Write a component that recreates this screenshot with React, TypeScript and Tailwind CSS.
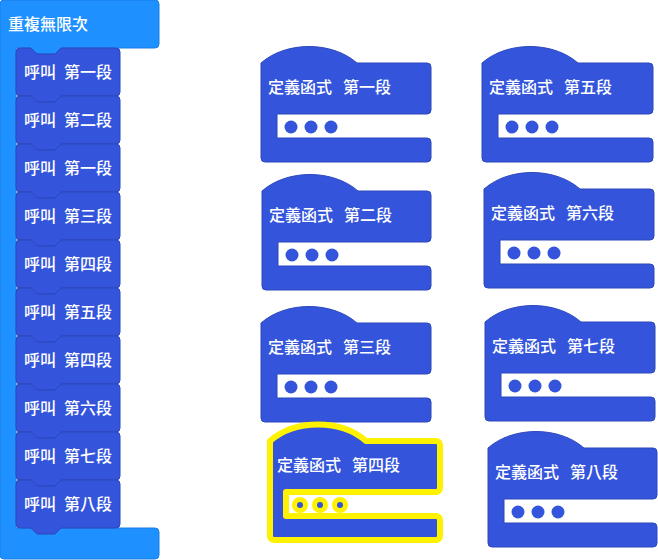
const FONT = { fontFamily: '"Noto Sans CJK TC", "Noto Sans", sans-serif' };

const calls = ['第一段', '第二段', '第一段', '第三段', '第四段', '第五段', '第四段', '第六段', '第七段', '第八段'];

const defs = [
  { x: 261, y: 63, w: 170, name: '第一段' },
  { x: 262, y: 191, w: 169, name: '第二段' },
  { x: 261, y: 323, w: 170, name: '第三段' },
  { x: 270, y: 441, w: 170, name: '第四段', selected: true },
  { x: 482, y: 63, w: 171, name: '第五段' },
  { x: 484, y: 189, w: 170, name: '第六段' },
  { x: 485, y: 322, w: 170, name: '第七段' },
  { x: 488, y: 448, w: 169, name: '第八段' },
];

function CallBlock({ name }: { name: string }) {
  const w = 104;
  const h = 48;
  const d = `M0,4 a4,4 0 0 1 4,-4 H15 l6,6 H39 l6,-6 H${w - 4} a4,4 0 0 1 4,4 V${h - 4} a4,4 0 0 1 -4,4 H45 l-6,6 H21 l-6,-6 H4 a4,4 0 0 1 -4,-4 Z`;
  return (
    <div className="relative w-[104px] h-12 flex items-center pl-2 pb-[2px] gap-2 text-white text-base font-medium">
      <svg className="absolute inset-0 overflow-visible" width={w} height={h}>
        <path d={d} fill="#3455db" stroke="#2c47bb" strokeWidth="1" />
      </svg>
      <span className="relative">呼叫</span>
      <span className="relative">{name}</span>
    </div>
  );
}

function DefBlock({ x, y, w, name, selected }: { x: number; y: number; w: number; name: string; selected?: boolean }) {
  const o = 17;
  const d = `M0,${o} c25,-22 71,-22 96,0 H${w - 4} a4,4 0 0 1 4,4 V${o + 47} a4,4 0 0 1 -4,4 H16 V${o + 75} H${w - 4} a4,4 0 0 1 4,4 V${o + 95} a4,4 0 0 1 -4,4 H4 a4,4 0 0 1 -4,-4 Z`;
  const cy = o + 64;
  return (
    <div className="absolute h-[116px]" style={{ left: x, top: y - o, width: w }}>
      <svg className="absolute inset-0 overflow-visible" width={w} height={116}>
        <path d={d} fill="#3455db" stroke={selected ? 'none' : '#2c47bb'} strokeWidth="1" />
        {selected && <path d={d} fill="none" stroke="#fff200" strokeWidth="6" strokeLinejoin="round" />}
        {[30, 50, 70].map((cx) =>
          selected ? (
            <circle key={cx} cx={cx} cy={cy} r="5.5" fill="#3455db" stroke="#fff200" strokeWidth="5" />
          ) : (
            <circle key={cx} cx={cx} cy={cy} r="6.5" fill="#3455db" />
          )
        )}
      </svg>
      <div className="relative flex gap-[11px] pl-[7px] pt-[28px] leading-6 text-white text-base font-medium">
        <span>定義函式</span>
        <span>{name}</span>
      </div>
    </div>
  );
}

export default function App() {
  const loop = `M0,4 a4,4 0 0 1 4,-4 H155 a4,4 0 0 1 4,4 V44 a4,4 0 0 1 -4,4 H61 l-6,6 H37 l-6,-6 H16 V528 H155 a4,4 0 0 1 4,4 V555 a4,4 0 0 1 -4,4 H4 a4,4 0 0 1 -4,-4 Z`;
  return (
    <div className="relative w-[658px] h-[560px] bg-white overflow-hidden" style={FONT}>
      {/* forever loop */}
      <div className="absolute left-0 top-0 w-[159px] h-[559px]">
        <svg className="absolute inset-0 overflow-visible" width={159} height={559}>
          <path d={loop} fill="#1e90ff" stroke="#1a7fe6" strokeWidth="1" />
        </svg>
        <div className="relative h-12 flex items-center pl-2 pb-[2px] text-white text-base font-medium">重複無限次</div>
        <div className="relative flex flex-col pl-4">
          {calls.map((c, i) => (
            <CallBlock key={i} name={c} />
          ))}
        </div>
      </div>

      {defs.map((b) => (
        <DefBlock key={b.name} {...b} />
      ))}
    </div>
  );
}
